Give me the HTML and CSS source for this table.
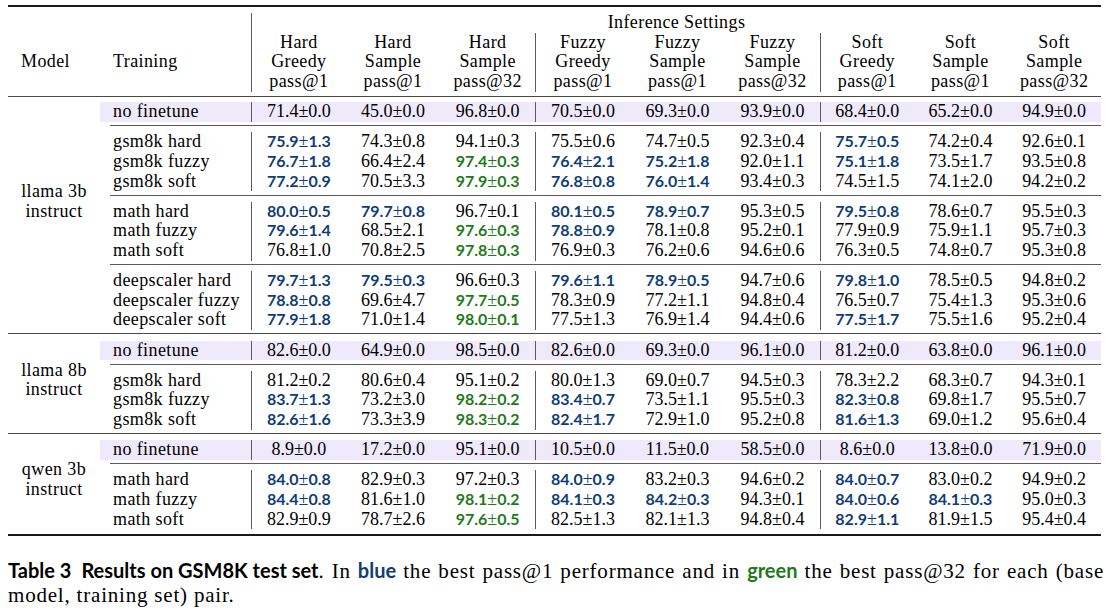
FILE: index.html
```html
<!DOCTYPE html>
<html lang="en">
<head>
<meta charset="utf-8">
<title>Table 3</title>
<link rel="stylesheet" href="styles.css">
</head>
<body>
<table class="results">
  <colgroup>
    <col class="c-model"><col class="c-train">
    <col class="c-a"><col class="c-a"><col class="c-a">
    <col class="c-b"><col class="c-b"><col class="c-b">
    <col class="c-c"><col class="c-c"><col class="c-c">
  </colgroup>
  <thead>
    <tr class="rule"><td colspan="11"><div class="toprule"></div></td></tr>
    <tr>
      <th colspan="2"></th>
      <th colspan="9" class="vl">Inference Settings</th>
    </tr>
    <tr class="hdr">
      <th class="h-model">Model</th>
      <th class="h-train">Training</th>
      <th class="vl">Hard<br>Greedy<br>pass@1</th>
      <th>Hard<br>Sample<br>pass@1</th>
      <th>Hard<br>Sample<br>pass@32</th>
      <th class="vl">Fuzzy<br>Greedy<br>pass@1</th>
      <th>Fuzzy<br>Sample<br>pass@1</th>
      <th>Fuzzy<br>Sample<br>pass@32</th>
      <th class="vl">Soft<br>Greedy<br>pass@1</th>
      <th>Soft<br>Sample<br>pass@1</th>
      <th>Soft<br>Sample<br>pass@32</th>
    </tr>
    <tr class="rule"><td colspan="11"><div class="headrule"></div></td></tr>
  </thead>

  <tbody>
    <tr class="band">
      <td class="model m-l3" rowspan="13">llama 3b<br>instruct</td>
      <td class="train">no finetune</td>
      <td class="num vl">71.4±0.0</td><td class="num">45.0±0.0</td><td class="num">96.8±0.0</td>
      <td class="num vl">70.5±0.0</td><td class="num">69.3±0.0</td><td class="num">93.9±0.0</td>
      <td class="num vl">68.4±0.0</td><td class="num">65.2±0.0</td><td class="num">94.9±0.0</td>
    </tr>
    <tr class="rule"><td colspan="10"><div class="cmidrule"></div></td></tr>
    <tr>
      <td class="train">gsm8k hard</td>
      <td class="num vl"><b class="bl">75.9<span class="pm">±</span>1.3</b></td><td class="num">74.3±0.8</td><td class="num">94.1±0.3</td>
      <td class="num vl">75.5±0.6</td><td class="num">74.7±0.5</td><td class="num">92.3±0.4</td>
      <td class="num vl"><b class="bl">75.7<span class="pm">±</span>0.5</b></td><td class="num">74.2±0.4</td><td class="num">92.6±0.1</td>
    </tr>
    <tr>
      <td class="train">gsm8k fuzzy</td>
      <td class="num vl"><b class="bl">76.7<span class="pm">±</span>1.8</b></td><td class="num">66.4±2.4</td><td class="num"><b class="gr">97.4<span class="pm">±</span>0.3</b></td>
      <td class="num vl"><b class="bl">76.4<span class="pm">±</span>2.1</b></td><td class="num"><b class="bl">75.2<span class="pm">±</span>1.8</b></td><td class="num">92.0±1.1</td>
      <td class="num vl"><b class="bl">75.1<span class="pm">±</span>1.8</b></td><td class="num">73.5±1.7</td><td class="num">93.5±0.8</td>
    </tr>
    <tr>
      <td class="train">gsm8k soft</td>
      <td class="num vl"><b class="bl">77.2<span class="pm">±</span>0.9</b></td><td class="num">70.5±3.3</td><td class="num"><b class="gr">97.9<span class="pm">±</span>0.3</b></td>
      <td class="num vl"><b class="bl">76.8<span class="pm">±</span>0.8</b></td><td class="num"><b class="bl">76.0<span class="pm">±</span>1.4</b></td><td class="num">93.4±0.3</td>
      <td class="num vl">74.5±1.5</td><td class="num">74.1±2.0</td><td class="num">94.2±0.2</td>
    </tr>
    <tr class="rule"><td colspan="10"><div class="cmidrule"></div></td></tr>
    <tr>
      <td class="train">math hard</td>
      <td class="num vl"><b class="bl">80.0<span class="pm">±</span>0.5</b></td><td class="num"><b class="bl">79.7<span class="pm">±</span>0.8</b></td><td class="num">96.7±0.1</td>
      <td class="num vl"><b class="bl">80.1<span class="pm">±</span>0.5</b></td><td class="num"><b class="bl">78.9<span class="pm">±</span>0.7</b></td><td class="num">95.3±0.5</td>
      <td class="num vl"><b class="bl">79.5<span class="pm">±</span>0.8</b></td><td class="num">78.6±0.7</td><td class="num">95.5±0.3</td>
    </tr>
    <tr>
      <td class="train">math fuzzy</td>
      <td class="num vl"><b class="bl">79.6<span class="pm">±</span>1.4</b></td><td class="num">68.5±2.1</td><td class="num"><b class="gr">97.6<span class="pm">±</span>0.3</b></td>
      <td class="num vl"><b class="bl">78.8<span class="pm">±</span>0.9</b></td><td class="num">78.1±0.8</td><td class="num">95.2±0.1</td>
      <td class="num vl">77.9±0.9</td><td class="num">75.9±1.1</td><td class="num">95.7±0.3</td>
    </tr>
    <tr>
      <td class="train">math soft</td>
      <td class="num vl">76.8±1.0</td><td class="num">70.8±2.5</td><td class="num"><b class="gr">97.8<span class="pm">±</span>0.3</b></td>
      <td class="num vl">76.9±0.3</td><td class="num">76.2±0.6</td><td class="num">94.6±0.6</td>
      <td class="num vl">76.3±0.5</td><td class="num">74.8±0.7</td><td class="num">95.3±0.8</td>
    </tr>
    <tr class="rule"><td colspan="10"><div class="cmidrule"></div></td></tr>
    <tr>
      <td class="train">deepscaler hard</td>
      <td class="num vl"><b class="bl">79.7<span class="pm">±</span>1.3</b></td><td class="num"><b class="bl">79.5<span class="pm">±</span>0.3</b></td><td class="num">96.6±0.3</td>
      <td class="num vl"><b class="bl">79.6<span class="pm">±</span>1.1</b></td><td class="num"><b class="bl">78.9<span class="pm">±</span>0.5</b></td><td class="num">94.7±0.6</td>
      <td class="num vl"><b class="bl">79.8<span class="pm">±</span>1.0</b></td><td class="num">78.5±0.5</td><td class="num">94.8±0.2</td>
    </tr>
    <tr>
      <td class="train">deepscaler fuzzy</td>
      <td class="num vl"><b class="bl">78.8<span class="pm">±</span>0.8</b></td><td class="num">69.6±4.7</td><td class="num"><b class="gr">97.7<span class="pm">±</span>0.5</b></td>
      <td class="num vl">78.3±0.9</td><td class="num">77.2±1.1</td><td class="num">94.8±0.4</td>
      <td class="num vl">76.5±0.7</td><td class="num">75.4±1.3</td><td class="num">95.3±0.6</td>
    </tr>
    <tr>
      <td class="train">deepscaler soft</td>
      <td class="num vl"><b class="bl">77.9<span class="pm">±</span>1.8</b></td><td class="num">71.0±1.4</td><td class="num"><b class="gr">98.0<span class="pm">±</span>0.1</b></td>
      <td class="num vl">77.5±1.3</td><td class="num">76.9±1.4</td><td class="num">94.4±0.6</td>
      <td class="num vl"><b class="bl">77.5<span class="pm">±</span>1.7</b></td><td class="num">75.5±1.6</td><td class="num">95.2±0.4</td>
    </tr>
    <tr class="rule"><td colspan="11"><div class="midrule"></div></td></tr>
  </tbody>

  <tbody>
    <tr class="band">
      <td class="model m-l8" rowspan="5">llama 8b<br>instruct</td>
      <td class="train">no finetune</td>
      <td class="num vl">82.6±0.0</td><td class="num">64.9±0.0</td><td class="num">98.5±0.0</td>
      <td class="num vl">82.6±0.0</td><td class="num">69.3±0.0</td><td class="num">96.1±0.0</td>
      <td class="num vl">81.2±0.0</td><td class="num">63.8±0.0</td><td class="num">96.1±0.0</td>
    </tr>
    <tr class="rule"><td colspan="10"><div class="cmidrule"></div></td></tr>
    <tr>
      <td class="train">gsm8k hard</td>
      <td class="num vl">81.2±0.2</td><td class="num">80.6±0.4</td><td class="num">95.1±0.2</td>
      <td class="num vl">80.0±1.3</td><td class="num">69.0±0.7</td><td class="num">94.5±0.3</td>
      <td class="num vl">78.3±2.2</td><td class="num">68.3±0.7</td><td class="num">94.3±0.1</td>
    </tr>
    <tr>
      <td class="train">gsm8k fuzzy</td>
      <td class="num vl"><b class="bl">83.7<span class="pm">±</span>1.3</b></td><td class="num">73.2±3.0</td><td class="num"><b class="gr">98.2<span class="pm">±</span>0.2</b></td>
      <td class="num vl"><b class="bl">83.4<span class="pm">±</span>0.7</b></td><td class="num">73.5±1.1</td><td class="num">95.5±0.3</td>
      <td class="num vl"><b class="bl">82.3<span class="pm">±</span>0.8</b></td><td class="num">69.8±1.7</td><td class="num">95.5±0.7</td>
    </tr>
    <tr>
      <td class="train">gsm8k soft</td>
      <td class="num vl"><b class="bl">82.6<span class="pm">±</span>1.6</b></td><td class="num">73.3±3.9</td><td class="num"><b class="gr">98.3<span class="pm">±</span>0.2</b></td>
      <td class="num vl"><b class="bl">82.4<span class="pm">±</span>1.7</b></td><td class="num">72.9±1.0</td><td class="num">95.2±0.8</td>
      <td class="num vl"><b class="bl">81.6<span class="pm">±</span>1.3</b></td><td class="num">69.0±1.2</td><td class="num">95.6±0.4</td>
    </tr>
    <tr class="rule"><td colspan="11"><div class="midrule"></div></td></tr>
  </tbody>

  <tbody>
    <tr class="band">
      <td class="model m-qw" rowspan="5">qwen 3b<br>instruct</td>
      <td class="train">no finetune</td>
      <td class="num vl">8.9±0.0</td><td class="num">17.2±0.0</td><td class="num">95.1±0.0</td>
      <td class="num vl">10.5±0.0</td><td class="num">11.5±0.0</td><td class="num">58.5±0.0</td>
      <td class="num vl">8.6±0.0</td><td class="num">13.8±0.0</td><td class="num">71.9±0.0</td>
    </tr>
    <tr class="rule"><td colspan="10"><div class="cmidrule"></div></td></tr>
    <tr>
      <td class="train">math hard</td>
      <td class="num vl"><b class="bl">84.0<span class="pm">±</span>0.8</b></td><td class="num">82.9±0.3</td><td class="num">97.2±0.3</td>
      <td class="num vl"><b class="bl">84.0<span class="pm">±</span>0.9</b></td><td class="num">83.2±0.3</td><td class="num">94.6±0.2</td>
      <td class="num vl"><b class="bl">84.0<span class="pm">±</span>0.7</b></td><td class="num">83.0±0.2</td><td class="num">94.9±0.2</td>
    </tr>
    <tr>
      <td class="train">math fuzzy</td>
      <td class="num vl"><b class="bl">84.4<span class="pm">±</span>0.8</b></td><td class="num">81.6±1.0</td><td class="num"><b class="gr">98.1<span class="pm">±</span>0.2</b></td>
      <td class="num vl"><b class="bl">84.1<span class="pm">±</span>0.3</b></td><td class="num"><b class="bl">84.2<span class="pm">±</span>0.3</b></td><td class="num">94.3±0.1</td>
      <td class="num vl"><b class="bl">84.0<span class="pm">±</span>0.6</b></td><td class="num"><b class="bl">84.1<span class="pm">±</span>0.3</b></td><td class="num">95.0±0.3</td>
    </tr>
    <tr>
      <td class="train">math soft</td>
      <td class="num vl">82.9±0.9</td><td class="num">78.7±2.6</td><td class="num"><b class="gr">97.6<span class="pm">±</span>0.5</b></td>
      <td class="num vl">82.5±1.3</td><td class="num">82.1±1.3</td><td class="num">94.8±0.4</td>
      <td class="num vl"><b class="bl">82.9<span class="pm">±</span>1.1</b></td><td class="num">81.9±1.5</td><td class="num">95.4±0.4</td>
    </tr>
    <tr class="rule"><td colspan="11"><div class="bottomrule"></div></td></tr>
  </tbody>
</table>

<p class="caption">
  <span class="cap-line first"><b class="cap-title cap-num">Table 3</b><b class="cap-title">Results on GSM8K test set</b>. In <b class="cap-kw bl">blue</b> the best pass@1 performance and in <b class="cap-kw gr">green</b> the best pass@32 for each (base</span>
  <span class="cap-line">model, training set) pair.</span>
</p>
</body>
</html>
```

FILE: styles.css
```css
html, body {
  background: #ffffff;
}

body {
  margin: 5px 8px 0;
  color: #000;
  font-family: "Liberation Serif", "Times New Roman", serif;
}

.results {
  width: 1093px;
  table-layout: fixed;
  border-collapse: separate;
  border-spacing: 0;
  font-size: 18px;
}

.c-model { width: 92px; }
.c-train { width: 151px; }
.c-a { width: 94.67px; }
.c-b { width: 95px; }
.c-c { width: 93.66px; }

.results th,
.results td {
  padding: 0;
  height: 19.65px;
  line-height: 19.65px;
  font-weight: 400;
  text-align: center;
  vertical-align: middle;
  white-space: nowrap;
}

.results th {
  letter-spacing: 0.4px;
}

.results .h-model,
.results .h-train {
  text-align: left;
  padding-left: 13px;
}

.results .train {
  text-align: left;
  padding-left: 13px;
  letter-spacing: 0.4px;
}

.results .model {
  letter-spacing: 0.4px;
  background: #fff;
}

.results .m-l3 { padding-bottom: 29px; }
.results .m-l8 { padding-bottom: 10px; }
.results .m-qw { padding-bottom: 10px; }

.results .vl {
  border-left: 1px solid #5a5a5a;
}

.band .train,
.band .num {
  background: #efeafb;
}

/* rules */
.results .rule td {
  height: auto;
  line-height: 0;
  font-size: 0;
}

.toprule {
  border-top: 2px solid #1a1a1a;
  margin-bottom: 6px;
}

.headrule {
  border-top: 1px solid #4a4a4a;
  margin: 4.5px 0 5px;
}

.midrule {
  border-top: 1px solid #4a4a4a;
  margin: 3.3px 0 6.2px;
}

.cmidrule {
  border-top: 1px solid #5a5a5a;
  margin: 3.3px 0 6.2px 10px;
}

.bottomrule {
  border-top: 2px solid #1a1a1a;
  margin-top: 4.5px;
}

/* highlighted values */
.bl,
.gr {
  font-family: Lato, "Open Sans", sans-serif;
  font-weight: 700;
}

.results .bl,
.results .gr {
  font-size: 16px;
  line-height: 0;
}

.bl { color: #0f3d77; }
.gr { color: #1f7a1a; }

.pm {
  font-family: "Liberation Serif", "Times New Roman", serif;
  font-weight: 400;
  font-size: 18px;
  line-height: 0;
}

/* caption */
.caption {
  margin: 22px 0 0;
  width: 1096px;
  font-size: 21px;
  line-height: 24px;
  letter-spacing: 0.8px;
}

.cap-line {
  display: block;
  white-space: nowrap;
}

.cap-line.first {
  text-align: justify;
  text-align-last: justify;
  white-space: normal;
}

.cap-title,
.cap-kw {
  font-family: Lato, "Open Sans", sans-serif;
  font-weight: 700;
  font-size: 20px;
  letter-spacing: 0;
}

.cap-title {
  display: inline-block;
}

.cap-num {
  margin-right: 10px;
}
```
